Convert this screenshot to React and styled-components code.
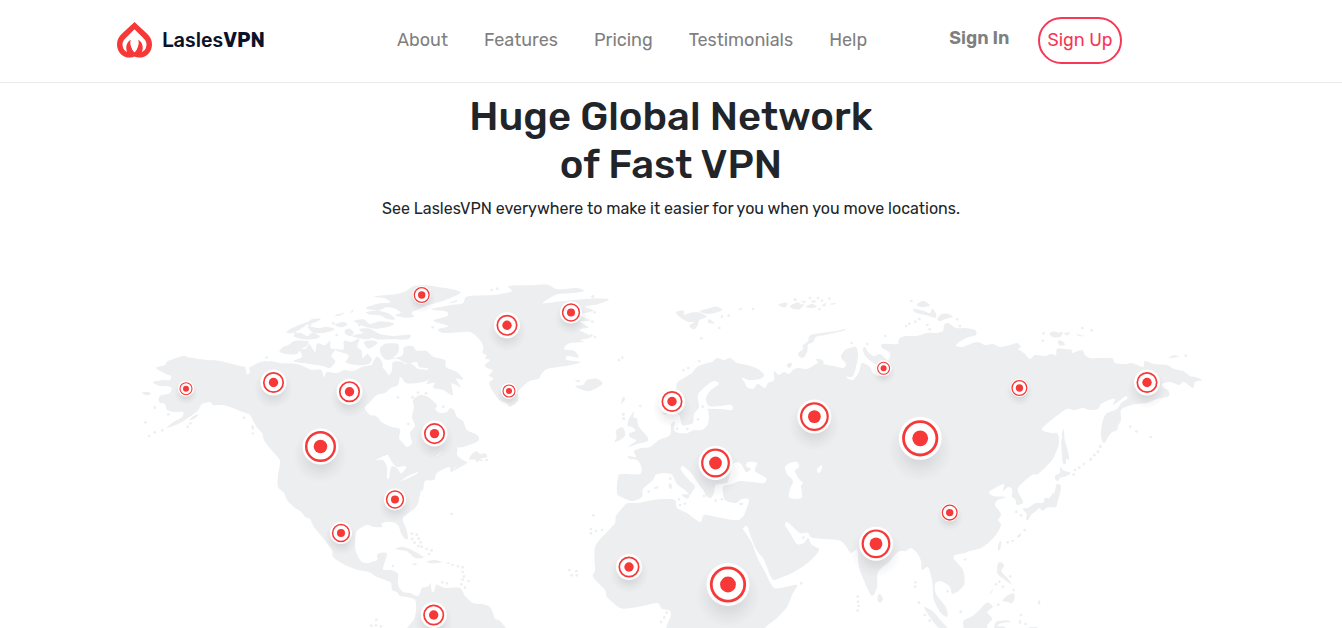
import React from "react";
import styled, { createGlobalStyle } from "styled-components";

const GlobalStyle = createGlobalStyle`
  *, *::before, *::after { box-sizing: border-box; }
  body {
    margin: 0;
    background: #fff;
    color: #212529;
    font-family: Rubik, Inter, "Liberation Sans", sans-serif;
    overflow-x: hidden;
  }
`;

const Header = styled.header`
  padding-bottom: 2px;
  border-bottom: 1px solid #ebecee;
`;

const Bar = styled.div`
  display: flex;
  align-items: center;
  max-width: 1140px;
  height: 80px;
  margin: 0 auto;
  padding: 0 16px;
`;

const Brand = styled.a`
  display: flex;
  align-items: center;
  gap: 10px;
  width: 280px;
  color: #0b132a;
  font-size: 20px;
  font-weight: 500;
  line-height: 24px;
  text-decoration: none;
`;

const Menu = styled.nav`
  display: flex;
  gap: 36px;
`;

const MenuLink = styled.a`
  color: #7f7f7f;
  font-size: 18px;
  font-weight: 400;
  line-height: 24px;
  text-decoration: none;
`;

const Account = styled.div`
  display: flex;
  align-items: center;
  gap: 28px;
  margin-left: 82px;
`;

const SignIn = styled.a`
  padding-bottom: 4px;
  color: #7f7f7f;
  font-size: 18px;
  font-weight: 600;
  line-height: 24px;
  text-decoration: none;
`;

const SignUp = styled.button`
  height: 47px;
  padding: 0 8px;
  border: 2px solid #f53855;
  border-radius: 25px;
  background: transparent;
  color: #f53855;
  font-family: inherit;
  font-size: 18px;
  font-weight: 400;
  line-height: 24px;
  white-space: nowrap;
`;

const Hero = styled.main`
  display: flex;
  flex-direction: column;
  align-items: center;
  padding-top: 10px;
`;

const Title = styled.h1`
  margin: 0;
  font-size: 40px;
  font-weight: 500;
  line-height: 48px;
  text-align: center;
`;

const Lead = styled.p`
  margin: 8px 0 59px;
  font-size: 16px;
  line-height: 24px;
  text-align: center;
`;

const Map = styled.svg`
  display: block;
  width: 100%;
  max-width: 1064px;
`;

const LAND = "#edeef0";

// Closed Catmull-Rom curve through a list of "x,y" points.
function outline(text) {
  const p = text.trim().split(/\s+/).map((s) => s.split(",").map(Number));
  const n = p.length;
  const at = (i) => p[(i + n) % n];
  let d = `M${p[0][0]} ${p[0][1]}`;
  for (let i = 0; i < n; i++) {
    const [a, b, c, e] = [at(i - 1), at(i), at(i + 1), at(i + 2)];
    const k = 7;
    d += `C${b[0] + (c[0] - a[0]) / k} ${b[1] + (c[1] - a[1]) / k} ${c[0] - (e[0] - b[0]) / k} ${c[1] - (e[1] - b[1]) / k} ${c[0]} ${c[1]}`;
  }
  return d + "Z";
}

const continents = [
  // The Americas
  `156,368 165,365 168,361 183,356 187,357 193,358 207,360 220,361 240,366 245,367 247,374 250,372 250,367 262,364 270,361 280,363 297,364
   307,368 312,370 321,370 324,377 327,372 337,373 344,370 353,371 362,367 373,365 380,366 385,370 389,375 392,370 393,362 402,362 408,367 418,369 426,370 431,374 426,380 421,378 415,382 405,380 400,377 398,385 391,388 385,393 377,395
   370,402 365,408 370,415 376,416 383,423 392,427 400,429 399,438 403,443 407,447 412,443 410,433 415,426 412,417 414,407 413,400 420,395 428,397 437,405 435,409
   440,413 447,412 450,408 454,410 457,417 463,421 467,430 477,435 478,441 463,447 452,448 440,453 436,457 447,449 457,448 457,455 463,460 467,463
   455,467 451,472 449,467 437,473 434,480 425,481 423,490 418,492 419,500 415,508 403,518 406,528 408,538 405,539 401,533 398,525 391,522 382,523 382,527 374,527 367,525 357,531 355,542 356,552
   361,561 367,563 377,560 377,555 380,553 387,554 383,569 391,570 398,574 398,585 403,592 410,593 418,596
   422,588 427,587 432,583 438,585 445,588 460,588 465,596 473,603 482,604 490,607 494,616 495,619 500,621 508,633 490,637 400,637 407,628
   414,619 416,610 415,600 407,597 400,596 397,592 392,590 391,583 385,580 377,577 369,572 358,570 345,565 333,557 332,550 323,538 308,520 300,511 295,508 287,500 284,493 278,487 278,475
   280,461 274,453 268,446 264,440 262,433 256,426 250,415 243,412 230,407 222,405 213,405 210,402 202,404 199,409 195,413 185,420 178,424 167,428 172,423 182,417 183,412 175,412
   167,410 165,404 159,402 160,396 170,393 171,387 160,386 153,382 164,380 170,380 171,376 166,374`,
  // Europe and Asia
  `677,383 684,378 692,373 697,367 707,363 712,362 717,358 724,360 730,358 737,363 747,365 758,369 764,375 760,379 750,380 742,378 745,383 747,387 753,389 758,384 765,388 768,383
   774,380 774,371 779,375 784,372 789,374 793,370 798,368 807,369 813,366 818,363 827,365 834,366 843,368 846,364 841,357 845,350 850,348 856,347 858,354 857,363 853,376 846,377
   853,380 859,372 862,363 870,367 873,373 879,376 883,369 875,364 866,357 863,350 865,347 868,352 874,356 880,354 888,360 890,353 882,348 882,344
   892,344 898,344 899,339 905,336 916,336 927,333 936,333 943,331 944,325 948,323 956,328 965,328 975,330 976,335 966,338 956,345
   962,347 977,342 985,345 993,344 1000,347 1010,345 1017,343 1021,347 1018,349 1024,353 1030,359 1035,355 1045,356 1051,354 1056,355 1057,349 1064,349 1072,350 1072,353 1082,350 1085,355
   1090,358 1100,358 1112,358 1115,363 1125,364 1132,363 1143,367 1145,361 1154,364 1167,365 1174,369 1183,371 1190,376 1195,377 1202,380 1195,382 1193,388 1186,383 1183,382 1179,385 1170,382
   1162,384 1164,388 1168,390 1169,396 1157,399 1147,403 1137,404 1128,406 1121,410 1121,420 1118,426 1117,430 1111,433 1104,443 1101,436 1102,424 1106,414 1117,409 1121,403 1127,399 1126,396
   1119,401 1113,405 1115,399 1109,400 1101,404 1098,409 1090,410 1083,408 1074,410 1067,409 1054,418 1042,429 1051,433 1057,433 1059,440 1058,447
   1052,460 1038,474 1032,475 1018,488 1022,499 1023,503 1017,505 1015,499 1012,497 1012,489 1008,487 1003,491 1004,484 995,488 989,492 993,496 1006,497 998,500
   995,505 1001,514 998,520 1001,525 995,536 983,547 970,551 965,553 955,555 954,559 963,570 964,585 953,594 950,587 945,583 940,581 935,584 936,594 943,603 947,610 947,617
   940,612 934,600 933,593 932,580 928,567 922,570 921,561 917,553 911,548 906,551 898,552 889,562 878,572 877,587 872,596 865,583 859,567 857,550 851,553 845,545
   838,540 813,538 808,533 800,533 793,527 787,522 785,525 790,533 797,544 804,543 808,538 812,545 819,549 815,556 805,565 792,573 780,578 774,580 770,575 764,560 756,549 750,534 747,526 742,528 740,520
   744,515 749,500 742,499 736,503 725,500 723,487 732,484 740,481 752,482 764,483 766,478 755,471 757,463 748,462 746,466 751,469 746,472 740,463 733,464 729,478 727,483
   716,485 714,493 711,498 706,496 704,491 698,483 692,474 683,466 681,470 689,480 695,486 692,492 690,495 685,490 677,484 671,474 657,474
   653,480 643,489 642,497 633,501 628,500 621,497 617,493 618,477 622,474 640,474 641,466 637,460 630,459 628,456 636,457 634,451 642,448 650,447 659,440 670,435 671,424 675,422 674,430 679,433 687,433 694,430 702,430 708,424
   709,414 708,409 720,409 732,410 731,405 720,406 709,406 706,398 711,390 719,384 714,381 706,386 698,395 699,407 694,414 693,423 686,425 682,425 679,415 673,413 668,407 665,398 675,393`,
  // Africa
  `628,503 638,503 653,500 664,499 675,500 677,508 687,513 700,522 704,515 716,517 733,520 742,520 742,527 752,543 757,557 765,572 773,587 781,588 797,585
   792,595 787,607 778,617 765,628 760,640 671,640 671,614 668,610 662,609 657,603 643,606 630,608 620,608 607,597 605,590 593,577 595,570 595,547 607,532 615,523 616,516 624,506`,
];

const waters = [
  `785,467 790,463 797,462 799,467 795,471 799,479 803,483 801,486 802,497 795,499 789,497 790,489 793,481 787,474`,
  `817,469 822,465 821,471 818,473`,
  `376,460 384,456 388,455 392,462 397,467 405,466 406,468 402,473 400,473 397,468 392,466 390,471 389,479 387,477 387,467 383,460`,
  `401,481 408,476 418,472 415,475`,
  `306,519 310,519 315,530 320,538 321,546 315,542 308,530`,
  `431,584 436,583 434,591 432,592`,
];

// Islands are drawn on sheets at three times the map's scale.
const sheets = [
  {
    at: [130, 280],
    land: [
      `35,338 55,336 62,342 50,346`,
      `178,422 190,408 205,404 195,415`,
      `362,262 385,248 412,243 395,256 368,268`,
      `468,158 485,145 515,136 500,150`,
      `530,133 545,118 572,116 560,125 540,131`,
      `365,435 372,440 371,450 365,445`,
      `364,458 372,458 371,465`,
    ],
    dots: [[75, 383], [46, 427], [57, 468], [74, 457], [97, 451], [115, 403], [173, 440], [181, 430], [342, 413], [410, 233], [497, 160], [537, 141]],
  },
  {
    at: [270, 280],
    land: [
      `312,50 340,46 380,42 410,32 430,18 470,16 500,20 540,26 572,36 555,48 520,62 470,77 440,90 425,98 432,110 405,113 375,106 392,98 375,86 350,82 325,92 295,88 290,82 330,70 360,68 345,55`,
      `288,96 320,92 355,100 375,118 350,116 330,106 300,104`,
      `268,148 300,146 330,162 370,168 420,164 412,178 360,178 320,178 290,166`,
      `55,195 75,182 115,184 108,200 92,206 80,222 45,222 28,214 40,200`,
      `88,208 108,206 118,192 135,216 142,190 165,196 180,182 182,205 196,208 184,228 196,244 180,264 158,258 120,252 70,244 96,230`,
      `70,168 90,158 112,168 126,158 150,168 138,176 100,178`,
      `196,206 220,208 222,182 244,186 268,176 262,200 275,212 278,234 292,222 306,238 296,252 270,256 240,252 228,246 236,226 204,214`,
      `246,168 286,160 316,166 292,178`,
      `330,206 344,192 370,190 386,194 384,218 370,234 398,226 402,202 428,198 440,212 468,212 490,230 525,240 528,262 560,276 580,298 558,296 572,322 545,310 548,346 520,330 490,324 494,308 470,312 480,290 460,280 474,266 448,262 440,246 410,250 380,236 350,240 334,226`,
      `384,266 420,250 460,282 485,290 460,306 410,310 395,290`,
      `282,186 312,182 322,190 296,206`,
      `320,230 338,250 332,270 305,262`,
      `195,105 225,98 205,108`,
      `240,98 250,88 248,96`,
      `55,160 75,140 115,126 100,142 75,156`,
      `115,140 145,144 170,140 195,148 166,158 130,158`,
      `225,150 240,146 252,158 240,168 226,162`,
      `195,134 220,126 232,134 214,142`,
      `252,124 280,118 300,132 330,124 372,130 356,140 320,146 290,142`,
    ],
    dots: [[120, 134], [200, 165], [190, 130], [428, 352], [444, 338], [384, 352], [468, 340], [520, 380], [415, 432], [268, 135]],
  },
  {
    at: [430, 280],
    land: [
      `35,158 24,148 55,138 10,122 52,108 48,94 4,88 58,76 98,70 110,50 160,46 200,44 245,34 236,18 300,16 352,14 384,28 440,24 462,34 420,40 385,42 366,50 338,70 392,64 432,60 480,56 536,58 506,72 466,80 490,92 450,104 482,122 450,124 476,142 448,150 484,170 452,180 462,186 418,190 402,208 432,212 446,232 412,228 410,240 452,246 420,256 380,262 350,268 334,282 326,296 300,302 280,318 264,336 264,362 240,380 230,370 208,360 186,330 178,308 190,296 176,286 188,272 164,258 180,240 166,236 170,226 158,218 160,200 148,178 120,156 70,158`,
      `436,318 460,314 470,300 500,296 518,310 500,324 474,334 452,328`,
      `434,302 450,300 446,306`,
      `56,70 80,60 78,66`,
    ],
    dots: [[8, 142], [185, 30], [202, 26], [488, 49], [494, 97], [487, 125], [484, 166], [495, 171], [404, 222], [567, 240], [577, 233], [580, 403], [581, 416]],
  },
  {
    at: [270, 440],
    land: [
      `598,58 604,44 620,34 630,42 644,40 652,50 632,56 642,64 618,60`,
      `540,98 562,78 590,70 570,82`,
      `376,328 398,320 430,332 462,352 436,354 410,334`,
      `470,365 494,360 516,367 486,370`,
      `426,372 440,370 436,376`,
      `528,368 538,367 536,372`,
      `442,152 452,148 450,166 444,178`,
      `652,560 670,544 680,556 665,572`,
    ],
    dots: [[545, 222], [426, 281], [440, 284], [427, 297], [446, 296], [434, 308], [452, 307], [445, 318], [455, 320], [470, 327], [485, 331], [477, 342], [369, 378], [548, 375], [564, 379], [578, 382], [578, 396], [582, 409], [578, 419], [596, 423], [574, 433], [585, 443], [517, 427], [531, 430], [319, 539], [304, 557], [318, 556], [333, 559], [622, 63], [650, 60]],
  },
  {
    at: [560, 280],
    land: [
      `205,420 222,394 220,412 232,416 234,436 248,454 262,470 262,484 232,492 204,500 228,482 210,472 208,460 226,452 216,440 204,438`,
      `164,486 170,470 168,452 186,442 194,452 194,468 180,480`,
      `348,96 372,92 372,104 392,98 420,98 440,110 418,120 414,134 402,148 388,138 402,126 384,126 360,112`,
      `420,94 450,84 470,80 488,90 460,100 440,102`,
      `444,128 448,118 464,130`,
      `305,398 325,400 315,404`,
      `184,372 188,352 196,356 190,366`,
      `534,88 546,84 544,90`,
      `680,258 686,250 696,252 690,262`,
      `655,74 680,68 674,82`,
      `690,78 710,68 722,72 720,88 700,86`,
    ],
    dots: [[486, 110], [506, 107], [579, 87], [424, 175], [478, 144], [241, 378], [370, 270], [385, 264], [418, 243], [428, 380], [414, 418], [449, 403], [382, 447], [351, 446], [190, 403], [191, 416], [99, 50], [705, 60]],
  },
  {
    at: [560, 440],
    land: [
      `364,164 388,164 382,176`,
      `536,191 550,188 546,196`,
      `280,144 296,138 290,146`,
      `327,130 335,134 334,146 327,144`,
      `448,156 460,162 452,168`,
    ],
    dots: [[331, 116], [266, 155], [432, 168], [467, 182], [486, 178], [357, 178], [360, 195], [375, 191], [100, 226], [93, 267], [93, 280], [108, 273], [126, 270], [28, 390], [49, 393], [35, 406], [50, 406], [320, 518], [313, 532], [303, 546]],
  },
  {
    at: [780, 280],
    land: [
      `54,220 70,206 68,196 84,184 90,166 130,158 165,154 198,146 185,154 140,164 108,170 100,186 84,194 82,214 72,232 60,232`,
      `108,238 122,238 132,248 120,252`,
      `22,256 30,248 36,254 28,264`,
      `410,74 430,62 450,76 428,82`,
      `400,86 430,92 450,100 456,86 468,100 466,114 440,106 408,98`,
      `472,116 486,102 504,102 518,110 494,118 480,124`,
      `0,72 22,70 15,82`,
      `30,78 50,68 62,74 72,70 66,82 46,88`,
      `78,80 96,72 110,80 90,84`,
      `126,76 138,68 134,80`,
      `148,72 168,68 160,74`,
      `64,62 80,64 72,68`,
      `92,66 104,60 106,68`,
    ],
    dots: [[394, 63], [378, 138], [388, 131], [406, 125], [418, 117], [442, 135], [449, 148], [532, 118], [540, 138], [316, 168], [262, 192], [215, 189], [46, 58], [114, 54], [148, 56], [118, 87], [126, 62], [90, 54]],
  },
  {
    at: [780, 440],
    land: [
      `294,466 302,464 309,478 302,488 293,484`,
      `432,502 456,512 478,536 506,570 480,566 460,546`,
      `550,358 560,354 556,362`,
      `205,330 222,326 214,338`,
      `654,320 662,304 662,322 656,332`,
    ],
    dots: [[63, 430], [406, 427], [406, 440], [417, 488], [435, 525], [449, 542], [503, 454], [543, 516], [233, 470], [234, 485], [236, 498], [233, 512], [70, 293]],
  },
  {
    at: [980, 280],
    land: [
      `208,162 220,154 236,158 248,156 242,170 220,172`,
      `252,160 270,158 262,166`,
      `234,184 244,182 256,194 238,196`,
      `288,162 312,168 296,168`,
      `566,234 582,226 596,230`,
      `246,462 252,448 254,480 262,506 268,540 260,536 256,552 248,545 250,510`,
    ],
    dots: [[191, 160], [188, 182], [307, 144], [335, 151], [617, 227], [451, 440], [469, 454], [512, 471], [361, 500], [354, 516], [343, 525], [333, 537]],
  },
  {
    at: [960, 440],
    land: [
      `304,0 314,0 318,26 326,40 316,42 318,68 308,66`,
      `300,80 312,92 332,98 320,108 300,114 294,124 286,118 286,106 300,98`,
      `290,132 302,136 302,152 294,180 288,200 264,202 248,212 238,204 228,214 214,224 204,240 198,236 200,222 188,206 204,204 226,190 250,188 254,174 268,174 278,160 284,156`,
      `114,370 126,368 132,378 124,394 140,412 156,434 130,416 112,400`,
      `128,482 140,468 160,460 164,474 156,490 144,486`,
      `10,544 34,530 56,512 80,488 98,500 82,516 96,536 82,556 78,580 20,580`,
      `104,566 108,546 125,542 148,542 148,546 122,550 112,558 135,560 130,566`,
      `88,464 98,446 96,456`,
      `114,328 118,306 124,306 119,328`,
      `176,546 182,538 182,554`,
      `172,288 182,280 182,288 174,294`,
      `208,562 232,562 222,568`,
      `234,484 240,482 240,494 234,490`,
    ],
    dots: [[341, 104], [345, 90], [358, 83], [371, 72], [392, 59], [403, 45], [414, 35], [421, 19], [434, 3], [169, 215], [183, 226], [194, 270], [143, 307], [158, 303], [118, 425], [108, 433], [129, 440], [151, 409], [161, 450], [115, 494], [183, 525], [197, 552], [2, 515]],
  },
];

const sizes = {
  xs: { halo: 8, ring: 6, dot: 3, stroke: 1.1 },
  s: { halo: 9, ring: 7.4, dot: 3.7, stroke: 1.3 },
  m: { halo: 11, ring: 8.4, dot: 4, stroke: 1.5 },
  l: { halo: 13, ring: 9.7, dot: 4.7, stroke: 1.7 },
  xl: { halo: 17, ring: 13.3, dot: 6.4, stroke: 2.2 },
  xxl: { halo: 18, ring: 14.3, dot: 6.8, stroke: 2.4 },
  huge: { halo: 21.5, ring: 16.7, dot: 7.9, stroke: 2.8 },
};

const pins = [
  [186, 388.7, "xs"], [273.5, 382.5, "l"], [349.5, 391.7, "l"], [421.7, 295, "s"],
  [507, 325.3, "l"], [571, 312.5, "m"], [509, 391, "xs"], [434.5, 433.6, "l"],
  [320.5, 446.5, "xxl"], [395, 499.5, "m"], [341, 533, "m"], [433.7, 615, "l"],
  [629, 567, "l"], [728, 584.5, "huge"], [715.5, 463, "xl"], [672, 401.5, "l"],
  [814.4, 416.6, "xl"], [920.2, 438.3, "huge"], [883.6, 368.3, "xs"], [876, 543.8, "xl"],
  [949.7, 512.6, "s"], [1019.4, 388, "s"], [1147, 382.5, "l"],
];

function Pin({ x, y, size }) {
  const s = sizes[size];
  return (
    <g transform={`translate(${x} ${y})`}>
      <circle cy={s.halo * 0.5} r={s.halo * 1.5} fill="url(#pin-shadow)" />
      <circle r={s.halo} fill="#fff" />
      <circle r={s.ring} fill="none" stroke="#f63838" strokeWidth={s.stroke} />
      <circle r={s.dot} fill="#f63838" />
    </g>
  );
}

function WorldMap() {
  return (
    <Map viewBox="139 280 1064 348" role="img" aria-label="World map of server locations">
      <defs>
        <radialGradient id="pin-shadow">
          <stop offset="0.4" stopColor="#20242c" stopOpacity="0.1" />
          <stop offset="0.7" stopColor="#20242c" stopOpacity="0.04" />
          <stop offset="1" stopColor="#20242c" stopOpacity="0" />
        </radialGradient>
      </defs>
      <g fill={LAND}>
        {continents.map((c) => <path key={c} d={outline(c)} />)}
      </g>
      <g fill="#fff">
        {waters.map((w) => <path key={w} d={outline(w)} />)}
      </g>
      {sheets.map(({ at, land, dots }) => (
        <g key={at.join()} fill={LAND} transform={`translate(${at[0]} ${at[1]}) scale(0.33333)`}>
          {land.map((l) => <path key={l} d={outline(l)} />)}
          {dots.map(([x, y]) => <circle key={`${x}-${y}`} cx={x} cy={y} r="4" />)}
        </g>
      ))}
      {pins.map(([x, y, size]) => <Pin key={`${x}-${y}`} x={x} y={y} size={size} />)}
    </Map>
  );
}

function Flame() {
  return (
    <svg width="35" height="36" viewBox="0 0 36 37" aria-hidden="true">
      <path
        fill="#f63838"
        fillRule="evenodd"
        d="M18 0 31 12C34 15 36 18.500 36 23C36 31 30 36.500 23 36.500C21 36.500 19.500 36.200 18 35.500C16.500 36.200 15 36.500 13 36.500C6 36.500 0 31 0 23C0 18.500 2 15 5 12Z
           M18 7.500 9 16.500C6 19.500 5 22 6 25.500C6.500 28 8 29.800 10.500 31C8.800 27 9 21.500 14 18.200C13.200 22 14 25 15.500 27.500C16.200 28.700 17 30 18 31C19 30 19.800 28.700 20.500 27.500C22 25 22.800 22 22 18.200C27 21.500 27.200 27 25.500 31C28 29.800 29.500 28 30 25.500C31 22 30 19.500 27 16.500Z"
      />
      <path fill="#fff" d="M18 17C16 20 14.800 23 15 25.500C15.200 28 16.500 30 18 31C19.500 30 20.800 28 21 25.500C21.200 23 20 20 18 17Z" />
    </svg>
  );
}

const links = ["About", "Features", "Pricing", "Testimonials", "Help"];

export default function App() {
  return (
    <>
      <GlobalStyle />
      <Header>
        <Bar>
          <Brand href="#home">
            <Flame />
            <span>Lasles<b>VPN</b></span>
          </Brand>
          <Menu aria-label="Main">
            {links.map((l) => <MenuLink key={l} href={`#${l.toLowerCase()}`}>{l}</MenuLink>)}
          </Menu>
          <Account>
            <SignIn href="#sign-in">Sign In</SignIn>
            <SignUp type="button">Sign Up</SignUp>
          </Account>
        </Bar>
      </Header>
      <Hero>
        <Title>Huge Global Network<br />of Fast VPN</Title>
        <Lead>See LaslesVPN everywhere to make it easier for you when you move locations.</Lead>
        <WorldMap />
      </Hero>
    </>
  );
}
